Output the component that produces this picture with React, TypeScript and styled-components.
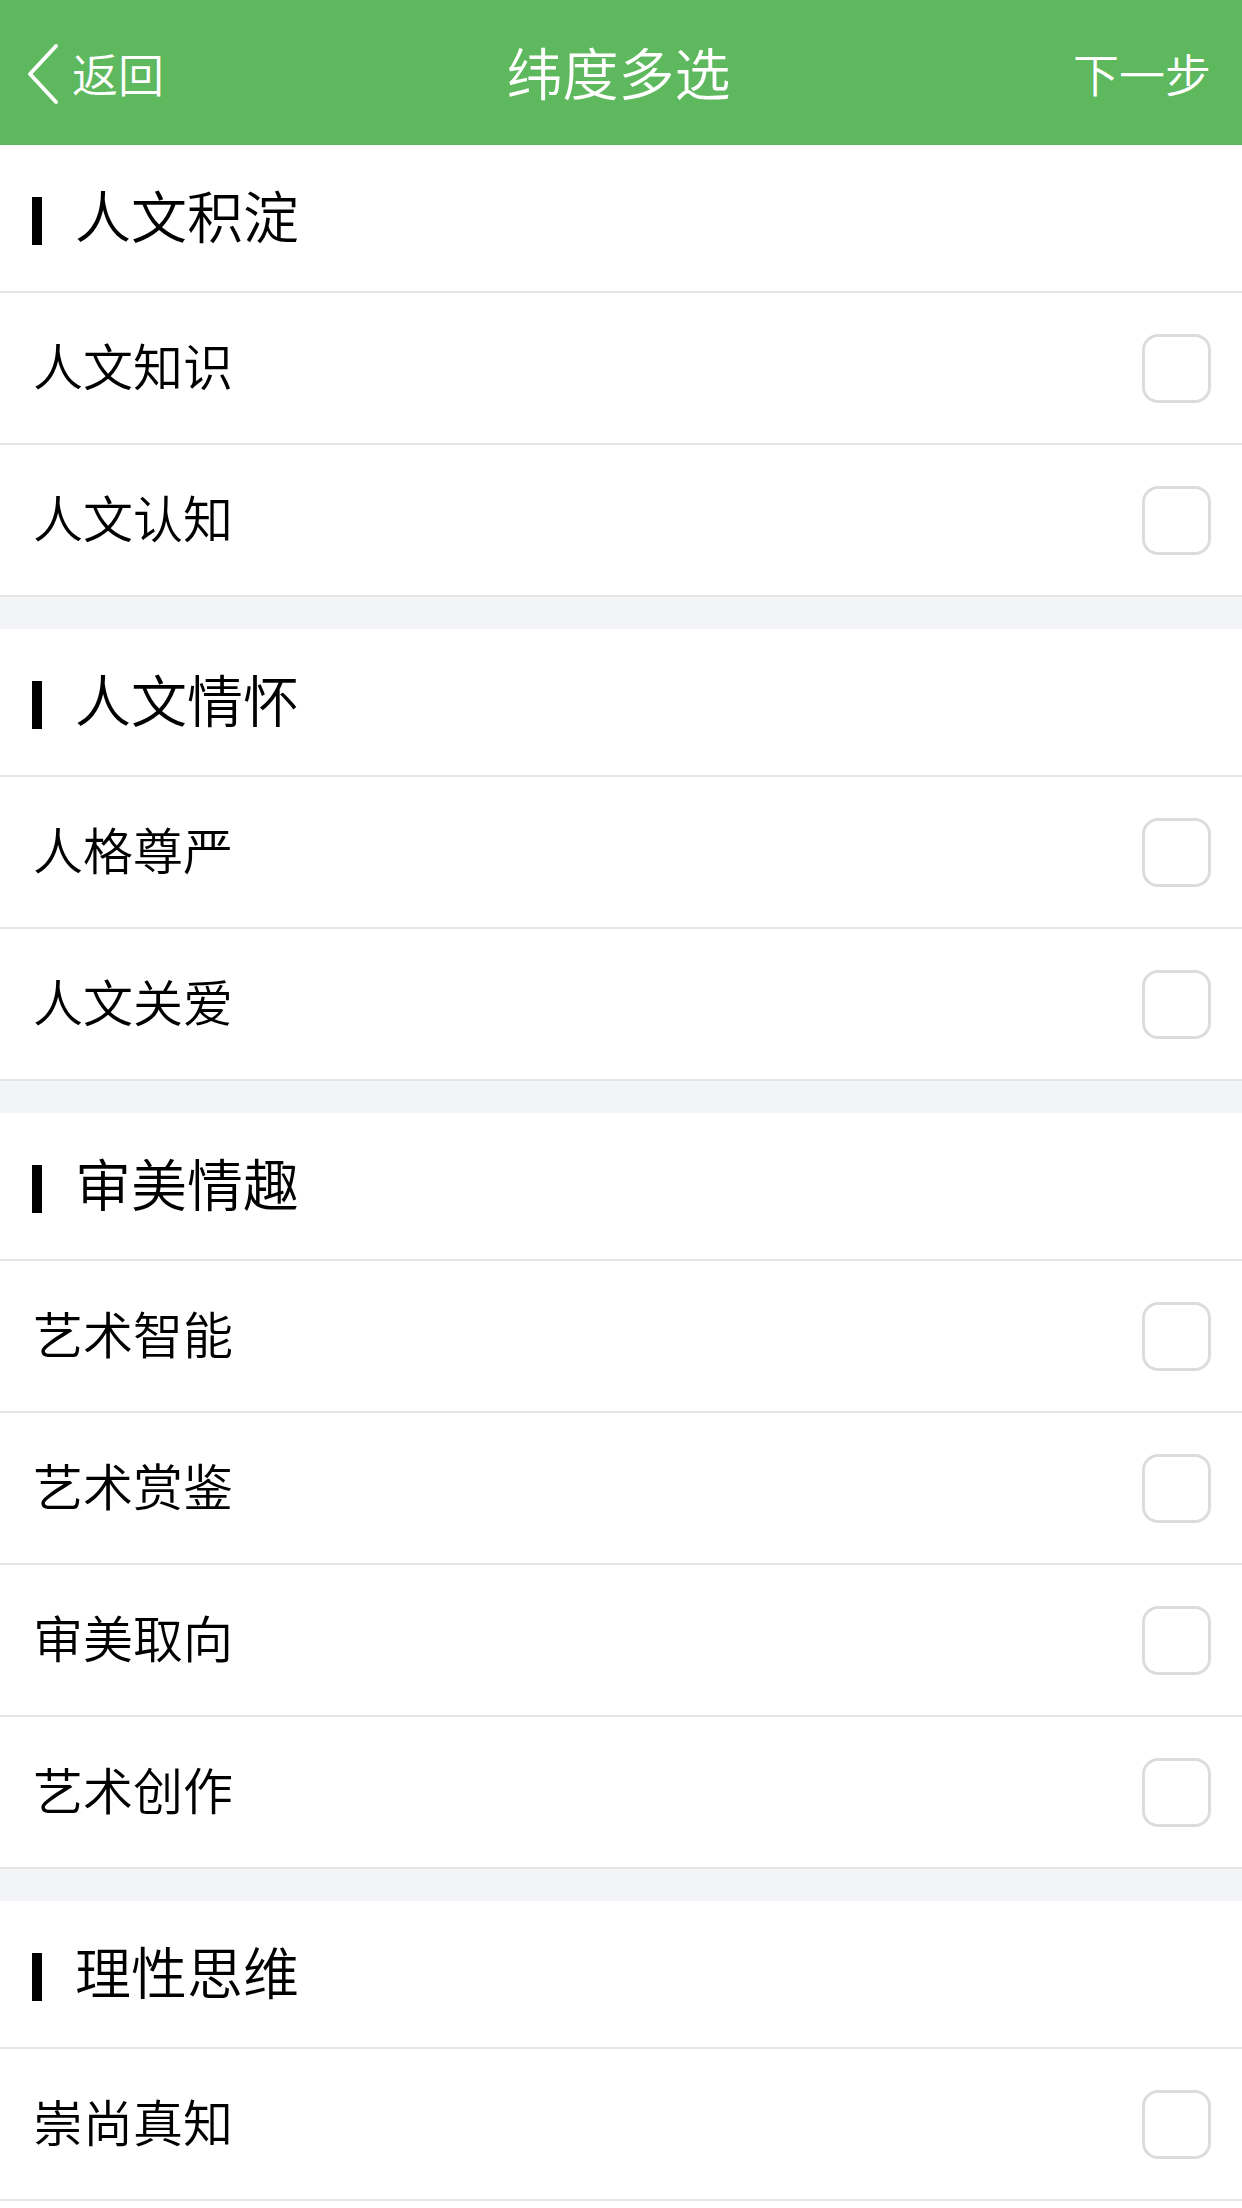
import React from "react"
import styled, { createGlobalStyle } from "styled-components"

const GlobalStyle = createGlobalStyle`
  html, body {
    margin: 0;
    padding: 0;
    background: #ffffff;
  }
  body {
    font-family: "Noto Sans CJK SC", "Noto Sans", sans-serif;
    font-weight: 350;
    color: #000000;
  }
`

const groups = [
  { title: "人文积淀", items: ["人文知识", "人文认知"] },
  { title: "人文情怀", items: ["人格尊严", "人文关爱"] },
  { title: "审美情趣", items: ["艺术智能", "艺术赏鉴", "审美取向", "艺术创作"] },
  { title: "理性思维", items: ["崇尚真知"] },
]

const BackIcon = () => (
  <svg width="34" height="62" viewBox="0 0 34 62" fill="none">
    <path
      d="M30 3 L4 31 L30 59"
      stroke="#ffffff"
      strokeWidth="4"
      strokeLinecap="round"
      strokeLinejoin="round"
    />
  </svg>
)

const App = () => {
  return (
    <Page>
      <GlobalStyle />
      <NavBar>
        <NavLeft>
          <BackIcon />
          <NavText>返回</NavText>
        </NavLeft>
        <NavTitle>纬度多选</NavTitle>
        <NavRight>
          <NavText>下一步</NavText>
        </NavRight>
      </NavBar>
      {groups.map((group, index) => (
        <Group key={group.title} $first={index === 0}>
          <SectionHeader>
            <SectionBar />
            <SectionTitle>{group.title}</SectionTitle>
          </SectionHeader>
          {group.items.map(item => (
            <Row key={item}>
              <RowLabel>{item}</RowLabel>
              <CheckBox />
            </Row>
          ))}
        </Group>
      ))}
    </Page>
  )
}

export default App

const Page = styled.div`
  width: 1242px;
  min-height: 2208px;
  background: #ffffff;
`

const NavBar = styled.div`
  display: grid;
  grid-template-columns: 1fr auto 1fr;
  align-items: center;
  height: 145px;
  padding: 0 31px 0 26px;
  box-sizing: border-box;
  background: #5eb85e;
  color: #ffffff;
`

const NavLeft = styled.div`
  display: flex;
  align-items: center;
  gap: 12px;
  justify-self: start;
  padding-top: 2px;
`

const NavRight = styled.div`
  justify-self: end;
`

const NavText = styled.span`
  font-size: 46px;
  line-height: 1;
  color: #ffffff;
  margin-bottom: 4px;
`

const NavTitle = styled.div`
  font-size: 56px;
  line-height: 1;
  color: #ffffff;
  margin-bottom: 4px;
`

const Group = styled.div<{ $first: boolean }>`
  border-top: ${props => (props.$first ? "none" : "32px solid #f3f4f8")};
`

const SectionHeader = styled.div`
  display: flex;
  align-items: center;
  height: 148px;
  box-sizing: border-box;
  padding-left: 32px;
  border-bottom: 2px solid #e6e6e6;
`

const SectionBar = styled.div`
  width: 10px;
  height: 48px;
  background: #000000;
  margin-top: 6px;
  margin-right: 33px;
`

const SectionTitle = styled.div`
  font-size: 56px;
  line-height: 1;
  color: #000000;
  margin-bottom: 8px;
`

const Row = styled.div`
  display: flex;
  align-items: center;
  justify-content: space-between;
  height: 152px;
  box-sizing: border-box;
  padding: 0 31px 0 33px;
  border-bottom: 2px solid #e6e6e6;
`

const RowLabel = styled.div`
  font-size: 50px;
  line-height: 1;
  color: #000000;
  margin-bottom: 8px;
`

const CheckBox = styled.div`
  width: 69px;
  height: 69px;
  box-sizing: border-box;
  border: 3px solid #dcdcdc;
  border-radius: 16px;
  background: #ffffff;
`
